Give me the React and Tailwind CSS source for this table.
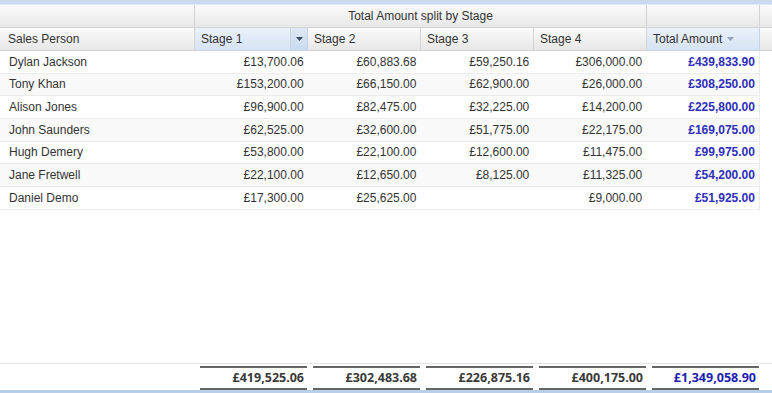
import React from 'react';

const rows = [
  ['Dylan Jackson', '£13,700.06', '£60,883.68', '£59,250.16', '£306,000.00', '£439,833.90'],
  ['Tony Khan', '£153,200.00', '£66,150.00', '£62,900.00', '£26,000.00', '£308,250.00'],
  ['Alison Jones', '£96,900.00', '£82,475.00', '£32,225.00', '£14,200.00', '£225,800.00'],
  ['John Saunders', '£62,525.00', '£32,600.00', '£51,775.00', '£22,175.00', '£169,075.00'],
  ['Hugh Demery', '£53,800.00', '£22,100.00', '£12,600.00', '£11,475.00', '£99,975.00'],
  ['Jane Fretwell', '£22,100.00', '£12,650.00', '£8,125.00', '£11,325.00', '£54,200.00'],
  ['Daniel Demo', '£17,300.00', '£25,625.00', '', '£9,000.00', '£51,925.00'],
];

const totals = ['£419,525.06', '£302,483.68', '£226,875.16', '£400,175.00', '£1,349,058.90'];

const hdr = 'bg-gradient-to-b from-[#fbfbfb] to-[#e7e7e7] border-r border-b border-[#d3d3d3]';

export default function App() {
  return (
    <div className="w-[772px] h-[393px] bg-white flex flex-col overflow-hidden font-['Liberation_Sans',Arial,sans-serif] text-[12px] text-[#333]">
      <div className="h-[5px] bg-[#c9d9ee] border-b border-[#dde7f3]" />

      {/* group header */}
      <div className="flex h-[23px]">
        <div className={`w-[195px] ${hdr}`} />
        <div className={`w-[452px] ${hdr} flex items-center justify-center`}>Total Amount split by Stage</div>
        <div className={`w-[113px] ${hdr}`} />
        <div className={`flex-1 ${hdr} border-r-0`} />
      </div>

      {/* column header */}
      <div className="flex h-[23px]">
        <div className={`w-[195px] ${hdr} flex items-center pl-[8px]`}>Sales Person</div>
        <div className="w-[113px] flex border-r border-b border-[#c5d3e6] bg-gradient-to-b from-[#eaf1fa] to-[#d6e3f3]">
          <div className="flex-1 flex items-center pl-[6px]">Stage 1</div>
          <div className="w-[17px] flex items-center justify-center border-l border-[#c5d3e6] bg-gradient-to-b from-[#dfe9f6] to-[#c9daef]">
            <svg width="7" height="4" viewBox="0 0 7 4"><path d="M0 0h7L3.5 4z" fill="#3a4a60" /></svg>
          </div>
        </div>
        {['Stage 2', 'Stage 3', 'Stage 4'].map(s => (
          <div key={s} className={`w-[113px] ${hdr} flex items-center pl-[6px]`}>{s}</div>
        ))}
        <div className="w-[113px] flex items-center gap-[5px] pl-[6px] border-r border-b border-[#c5d3e6] bg-gradient-to-b from-[#eaf1fa] to-[#d6e3f3]">
          Total Amount
          <svg width="7" height="4" viewBox="0 0 7 4"><path d="M0 0h7L3.5 4z" fill="#8fa3bd" /></svg>
        </div>
        <div className={`flex-1 ${hdr} border-r-0`} />
      </div>

      {/* data rows */}
      {rows.map((r, i) => (
        <div key={r[0]} className="flex h-[22.67px]">
          <div className={`w-[760px] flex border-b border-r border-[#ececec] ${i % 2 ? 'bg-[#f9f9f9]' : 'bg-white'}`}>
            <div className="w-[195px] flex items-center pl-[9px]">{r[0]}</div>
            {r.slice(1).map((v, j) => (
              <div
                key={j}
                className={`w-[113px] flex items-center justify-end pr-[4px] ${j === 4 ? 'font-bold text-[#2e2eb8]' : ''}`}
              >
                {v}
              </div>
            ))}
          </div>
        </div>
      ))}

      <div className="flex-1" />

      {/* totals */}
      <div className="h-[27px] flex border-t border-[#e3e3e3] pt-[2px] font-['Noto_Sans','DejaVu_Sans',sans-serif] font-bold text-[12.5px]">
        <div className="w-[195px]" />
        {totals.map((t, i) => (
          <div key={i} className="w-[113px] pl-[5px] pr-[1px]">
            <div
              className={`h-full flex items-center justify-end pr-[3px] border-t-2 border-b-2 border-[#666] ${i === 4 ? 'text-[#2020b0]' : 'text-[#3a3a3a]'}`}
            >
              {t}
            </div>
          </div>
        ))}
      </div>

      <div className="h-[3px] bg-[#b9cfe9]" />
    </div>
  );
}
